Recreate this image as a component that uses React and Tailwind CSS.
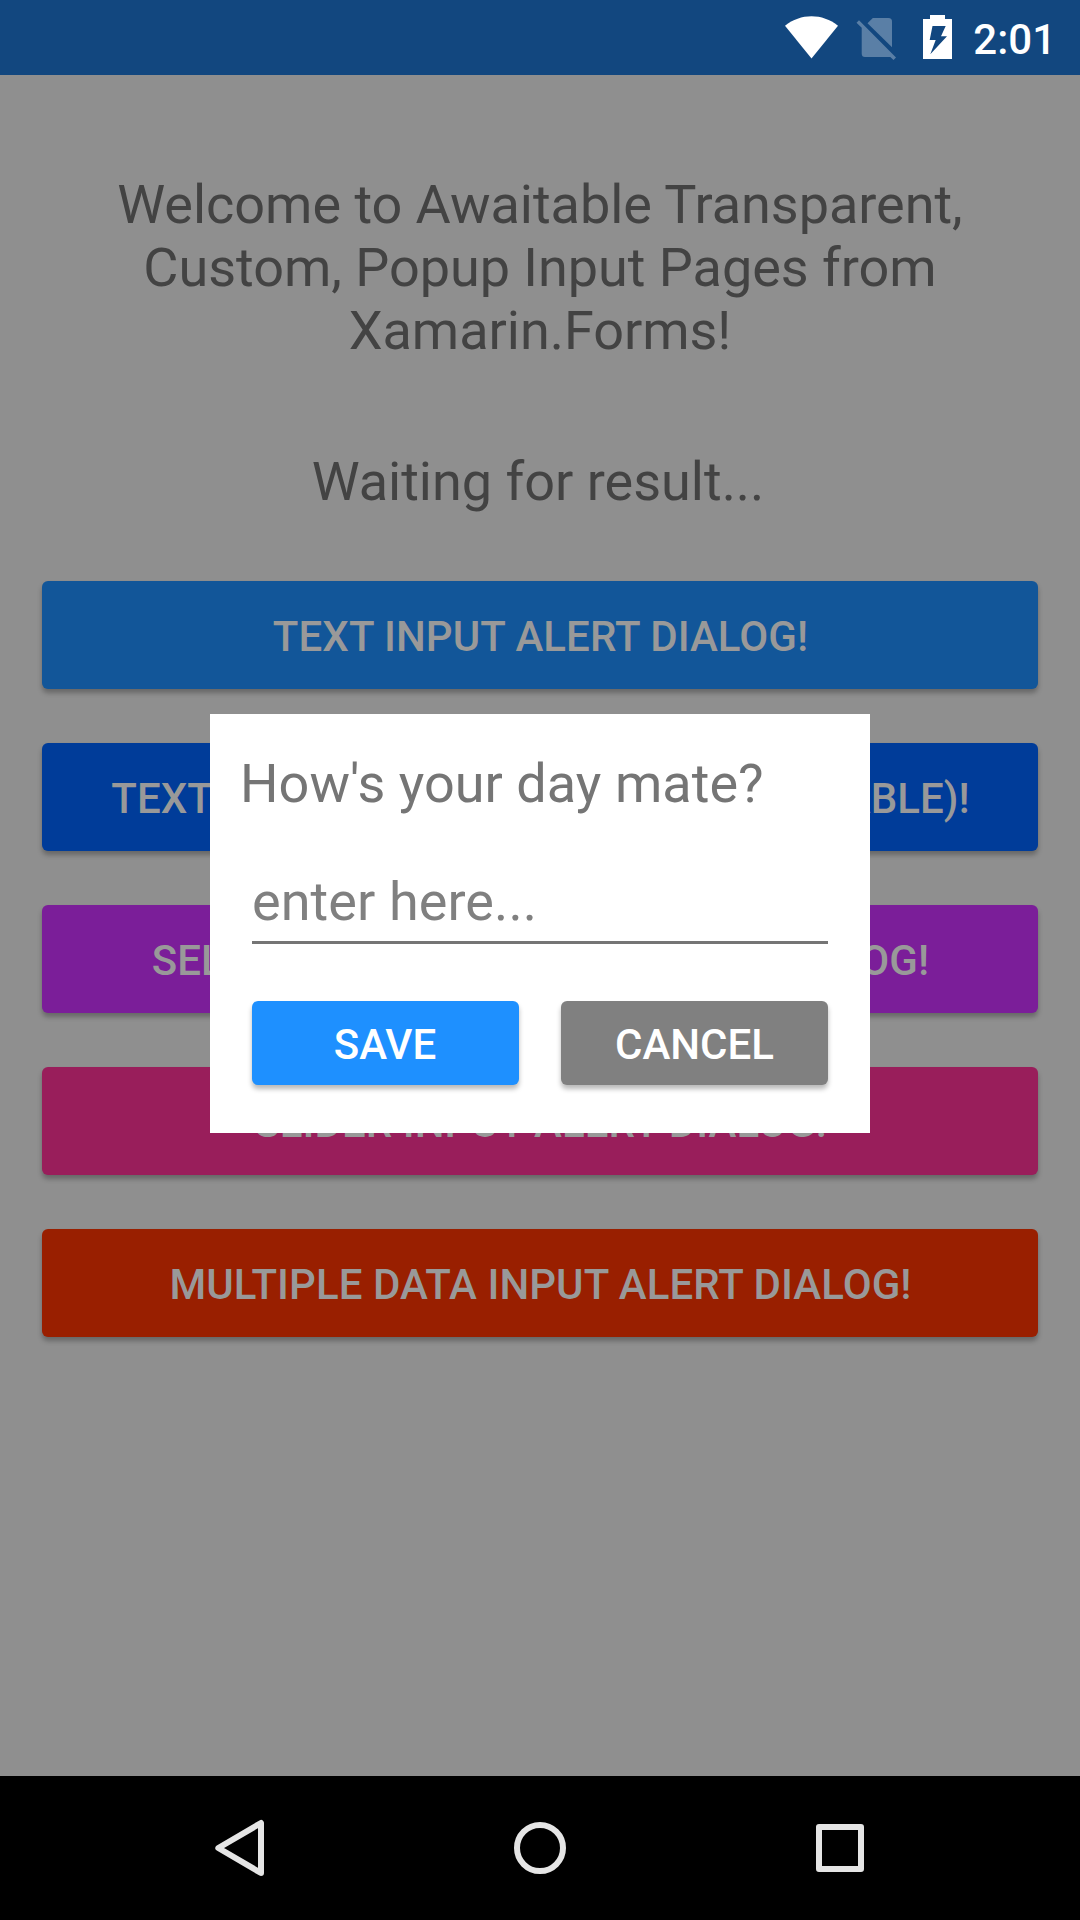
const actions = [
  { label: "TEXT INPUT ALERT DIALOG!", tone: "bg-[#125699]" },
  { label: "TEXT INPUT ALERT DIALOG (CANCELLABLE)!", tone: "bg-[#003c99]" },
  { label: "SELECTABLE LIST INPUT ALERT DIALOG!", tone: "bg-[#7b1e99]" },
  { label: "SLIDER INPUT ALERT DIALOG!", tone: "bg-[#991e5b]" },
  { label: "MULTIPLE DATA INPUT ALERT DIALOG!", tone: "bg-[#991f00]" },
];

function StatusBar() {
  return (
    <header className="flex h-[75px] shrink-0 items-start justify-end bg-[#12477f] pr-[24px] text-white">
      <svg className="h-[75px] w-[180px]" viewBox="781 0 180 75" fill="currentColor">
        <path d="M785 25.700C800.500 13 822.500 13 838 25.700L811.500 58.500Z" />
        <g opacity="0.3">
          <path d="M872.800 18H888.500Q892 18 892 21.500V47.300L867.500 23.300Z" />
          <path d="M856.500 22.800L859 20.300L896 57.500L893.500 60L890.300 57H865Q861.700 57 861.700 53.500V27.800Z" />
        </g>
        <path
          fillRule="evenodd"
          d="M930 15H945V19H952V59H923V19H930ZM932.500 26L929.700 40H935.700L930.300 54.300L947 36.300H941L945.700 26Z"
        />
      </svg>
      <span className="ml-[12px] mt-[15px] text-[42px] leading-[49px] font-medium">2:01</span>
    </header>
  );
}

function Dialog() {
  return (
    <section className="absolute left-[210px] top-[714px] flex h-[419px] w-[660px] flex-col bg-white px-[42px] pt-[38px]">
      <h2 className="-ml-3 text-[54px] leading-[63px] tracking-[0.04px] text-[#757575]">How's your day mate?</h2>
      <div className="mt-[55px] h-[74px] border-b-[3px] border-[#757575] text-[54px] leading-[63px] tracking-[0.08px] text-[#808080]">
        enter here...
      </div>
      <div className="mt-[57px] grid grid-cols-2 gap-[42px] text-[42px] font-medium text-white">
        <button className="h-[84px] rounded-[6px] bg-[#1e90ff] pt-[2px] pr-[1px] leading-[49px] shadow-[0_4px_5px_rgba(0,0,0,0.28)]">
          SAVE
        </button>
        <button className="h-[84px] rounded-[6px] bg-[#808080] pt-[2px] leading-[49px] shadow-[0_4px_5px_rgba(0,0,0,0.28)]">
          CANCEL
        </button>
      </div>
    </section>
  );
}

function Navigation() {
  return (
    <nav className="flex h-[144px] shrink-0 items-center justify-center gap-[240px] bg-black text-[#e5e5e5]">
      <svg className="size-[60px]" viewBox="210 1818 60 60" fill="none" stroke="currentColor" strokeWidth="6" strokeLinejoin="round">
        <path d="M218.300 1848L261 1823V1873Z" />
      </svg>
      <svg className="size-[60px]" viewBox="0 0 60 60" fill="none" stroke="currentColor" strokeWidth="6">
        <circle cx="30" cy="30" r="23" />
      </svg>
      <svg className="size-[60px]" viewBox="0 0 60 60" fill="none" stroke="currentColor" strokeWidth="6" strokeLinejoin="round">
        <rect x="9" y="9" width="42" height="42" />
      </svg>
    </nav>
  );
}

export default function App() {
  return (
    <div className="relative flex h-[1920px] w-[1080px] flex-col overflow-hidden bg-[#8f8f8f] font-['Roboto',sans-serif]">
      <StatusBar />
      <main className="flex grow flex-col px-[42px] pt-[98px]">
        <h1 className="text-center text-[54px] leading-[63px] tracking-[-0.03px] text-[#434343]">
          Welcome to Awaitable Transparent,
          <br />
          Custom, Popup Input Pages from
          <br />
          Xamarin.Forms!
        </h1>
        <p className="mt-[88px] pr-[4px] text-center text-[54px] leading-[63px] text-[#434343]">Waiting for result...</p>
        <div className="mt-[68px] flex flex-col gap-[54px]">
          {actions.map(({ label, tone }) => (
            <button
              key={label}
              className={`h-[108px] rounded-[6px] pt-[2px] pl-[1px] text-[42px] leading-[49px] font-medium tracking-[0.06px] whitespace-nowrap text-[#999999] shadow-[0_4px_5px_rgba(0,0,0,0.28)] ${tone}`}
            >
              {label}
            </button>
          ))}
        </div>
      </main>
      <Navigation />
      <Dialog />
    </div>
  );
}
